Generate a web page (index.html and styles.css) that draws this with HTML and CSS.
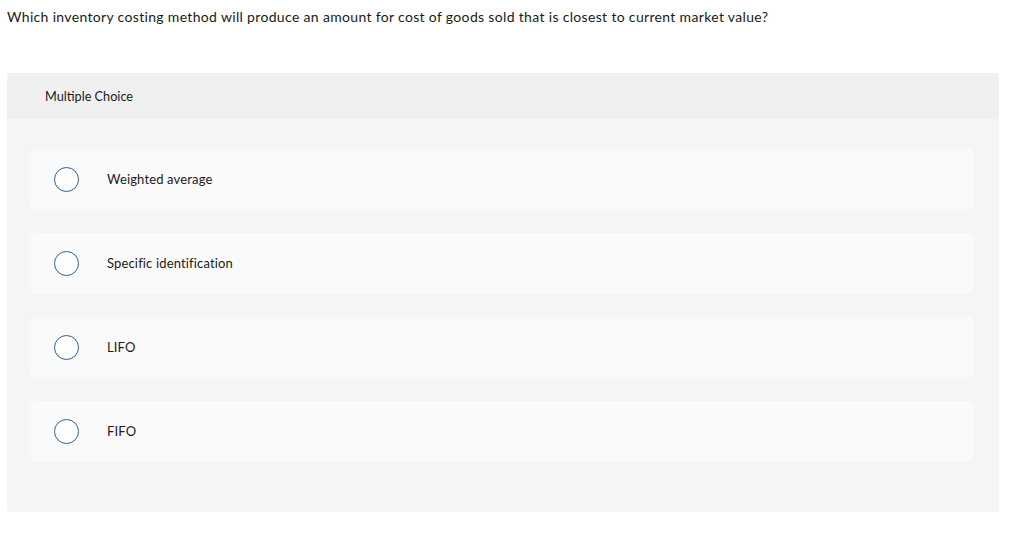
FILE: index.html
```html
<!DOCTYPE html>
<html>
<head>
<meta charset="utf-8">
<link rel="stylesheet" href="styles.css">
</head>
<body>
<div class="page">
  <p class="question">Which inventory costing method will produce an amount for cost of goods sold that is closest to current market value?</p>
  <div class="panel">
    <div class="panel-head">Multiple Choice</div>
    <div class="panel-body">
      <div class="option"><span class="radio"></span><span class="label">Weighted average</span></div>
      <div class="option"><span class="radio"></span><span class="label">Specific identification</span></div>
      <div class="option"><span class="radio"></span><span class="label">LIFO</span></div>
      <div class="option"><span class="radio"></span><span class="label">FIFO</span></div>
    </div>
  </div>
</div>
</body>
</html>
```
FILE: styles.css
```css
html, body { margin: 0; padding: 0; background: #fff; }
body { font-family: Lato, "Open Sans", sans-serif; color: #1a1a1a; }
.page { padding: 0 25px 0 7px; }
.question { margin: 0; padding-top: 8px; font-size: 14px; letter-spacing: 0.33px; line-height: 17px; height: 73px; box-sizing: border-box; }
.panel { background: #f5f5f5; border-radius: 3px; overflow: hidden; }
.panel-head { background: #f0f0f0; height: 46px; display: flex; align-items: center; padding-left: 38px; font-size: 12.7px; }
.panel-body { padding: 30px 26px 51px 24px; display: flex; flex-direction: column; gap: 24px; }
.option { background: #fafafa; height: 60px; border-radius: 3px; display: flex; align-items: center; padding-left: 23px; }
.radio { width: 23px; height: 23px; border: 1.5px solid #2b6197; border-radius: 50%; background: #fff; flex: none; }
.label { margin-left: 28px; font-size: 13px; letter-spacing: 0.15px; }
```
